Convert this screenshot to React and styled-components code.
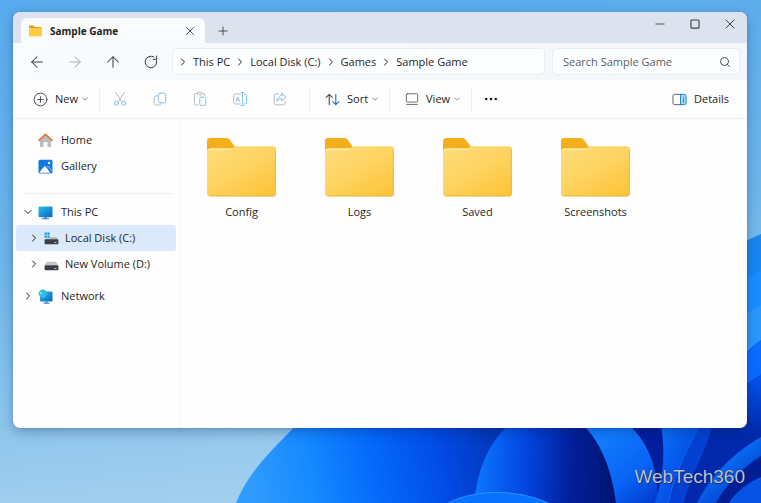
import React from "react";
import styled, { createGlobalStyle, css } from "styled-components";
import {
  ArrowLeft,
  ArrowRight,
  ArrowUp,
  ChevronDown,
  ChevronRight,
  Minus,
  Plus,
  Search,
  X,
} from "lucide-react";

const GlobalStyle = createGlobalStyle`
  * {
    box-sizing: border-box;
  }

  body {
    margin: 0;
    background: #5badee;
    color: #1f1f1f;
    font-family: "Open Sans", "Noto Sans", sans-serif;
    font-size: 11px;
    line-height: 16px;
  }

  button, input {
    font: inherit;
    color: inherit;
  }

  svg {
    display: block;
    flex: none;
  }
`;

const Desktop = styled.div`
  position: relative;
  isolation: isolate;
  min-height: 100vh;
  display: flex;
  flex-direction: column;
  padding: 12px 14px 0 13px;
`;

const WallpaperSvg = styled.svg`
  position: absolute;
  inset: 0;
  z-index: -1;
  width: 100%;
  height: 100%;
`;

const Window = styled.div`
  flex: 1;
  display: flex;
  flex-direction: column;
  overflow: hidden;
  border-radius: 7px;
  background: #fefefe;
  box-shadow: 0 0 1px rgba(0, 30, 80, 0.5), 0 4px 12px rgba(0, 30, 80, 0.3);
`;

const TitleBar = styled.header`
  display: flex;
  align-items: flex-end;
  height: 31px;
  padding-left: 8px;
  background: #dce3ee;
`;

const Tab = styled.div`
  display: flex;
  align-items: center;
  gap: 8px;
  width: 184px;
  height: 25px;
  padding: 0 5px 0 8px;
  border-radius: 6px 6px 0 0;
  background: #fafbfd;
`;

const TabTitle = styled.span`
  flex: 1;
  font-size: 10px;
  font-weight: 700;
`;

const IconButton = styled.button`
  display: flex;
  align-items: center;
  justify-content: center;
  width: ${(props) => props.$width || 24}px;
  height: 24px;
  padding: 0;
  border: 0;
  border-radius: 4px;
  background: transparent;
  color: ${(props) => (props.$muted ? "#a9adb3" : "#3a3d43")};
`;

const WindowControls = styled.div`
  display: flex;
  align-self: flex-start;
  margin-left: auto;
`;

const NavBar = styled.div`
  display: flex;
  align-items: center;
  height: 37px;
  padding: 0 7px 0 11px;
  background: linear-gradient(90deg, #fafbfd 0%, #f6f8fc 45%, #f4f6fa 100%);
`;

const NavButtons = styled.div`
  display: flex;
  gap: 12px;
  margin-right: 8px;
`;

const fieldStyle = css`
  display: flex;
  align-items: center;
  height: 27px;
  border: 1px solid #e9ecf2;
  border-radius: 5px;
  background: #fdfeff;
`;

const AddressBar = styled.nav`
  ${fieldStyle}
  flex: 1;
  gap: 4px;
  min-width: 0;
  margin-right: 7px;
  padding: 0 4px;
`;

const Crumb = styled.a`
  color: inherit;
  text-decoration: none;
  white-space: nowrap;
`;

const SearchBox = styled.label`
  ${fieldStyle}
  width: 188px;
  padding: 0 8px 0 10px;
`;

const SearchInput = styled.input`
  flex: 1;
  min-width: 0;
  padding: 0;
  border: 0;
  outline: 0;
  background: transparent;

  &::placeholder {
    color: #5b5e64;
    opacity: 1;
  }
`;

const Toolbar = styled.div`
  display: flex;
  align-items: center;
  height: 39px;
  padding: 0 9px 0 5px;
  border-bottom: 1px solid #ebedf0;
`;

const ToolButton = styled.button`
  display: flex;
  align-items: center;
  gap: 7px;
  height: 28px;
  margin-left: ${(props) => (props.$end ? "auto" : 0)};
  padding: 0 9px 0 15px;
  border: 0;
  background: transparent;
`;

const ToolLabel = styled.span`
  display: flex;
  align-items: center;
  gap: 2px;
`;

const ToolGroup = styled.div`
  display: flex;
  gap: 16px;
  padding: 0 17px 0 8px;
`;

const Divider = styled.span`
  width: 1px;
  height: 26px;
  background: #f0f1f3;
`;

const Body = styled.div`
  flex: 1;
  display: flex;
`;

const Sidebar = styled.nav`
  width: 167px;
  padding: 8px 3px;
  border-right: 1px solid #f4f5f6;
`;

const SideItem = styled.a`
  display: flex;
  align-items: center;
  height: 26px;
  padding-left: ${(props) => (props.$nested ? 12 : 6)}px;
  border-radius: 3px;
  background: ${(props) => (props.$active ? "#dbe9fa" : "transparent")};
  color: inherit;
  text-decoration: none;

  > svg {
    margin-right: ${(props) => (props.$nested ? 6 : 8)}px;
  }
`;

const ChevronSlot = styled.span`
  width: 16px;
`;

const SideRule = styled.hr`
  height: 1px;
  margin: 14px 4px 5px 7px;
  border: 0;
  background: #ecedef;
`;

const SideGap = styled.div`
  height: 6px;
`;

const Files = styled.main`
  flex: 1;
  display: flex;
  flex-wrap: wrap;
  align-content: flex-start;
  gap: 24px 49px;
  padding: 19px 27px;
`;

const FileItem = styled.a`
  display: flex;
  flex-direction: column;
  align-items: center;
  gap: 7px;
  width: 69px;
  color: inherit;
  text-decoration: none;
`;

const Watermark = styled.footer`
  height: 75px;
  padding: 36px 2px 0 0;
  color: #b9c1d8;
  font-family: "Liberation Sans", Arial, sans-serif;
  font-size: 19px;
  line-height: 26px;
  text-align: right;
  text-shadow: 0 0 1px #101c50, 1px 1px 0 rgba(20, 30, 80, 0.6);
`;

const Wallpaper = () => (
  <WallpaperSvg viewBox="0 0 761 503" preserveAspectRatio="none" aria-hidden="true">
    <defs>
      <linearGradient id="sky" x1="0.1" y1="0" x2="0.25" y2="1">
        <stop offset="0" stopColor="#58abed" />
        <stop offset="0.5" stopColor="#6db5ea" />
        <stop offset="1" stopColor="#a2cfee" />
      </linearGradient>
      <linearGradient id="p1" gradientUnits="userSpaceOnUse" x1="250" y1="480" x2="500" y2="430">
        <stop offset="0" stopColor="#2f9bfd" />
        <stop offset="0.25" stopColor="#1488ff" />
        <stop offset="0.5" stopColor="#0468fb" />
        <stop offset="0.75" stopColor="#024be6" />
        <stop offset="1" stopColor="#0233b4" />
      </linearGradient>
      <linearGradient id="p2" gradientUnits="userSpaceOnUse" x1="480" y1="455" x2="610" y2="460">
        <stop offset="0" stopColor="#0a74fc" />
        <stop offset="0.35" stopColor="#0346e2" />
        <stop offset="0.7" stopColor="#02209c" />
        <stop offset="1" stopColor="#021576" />
      </linearGradient>
      <linearGradient id="p3" gradientUnits="userSpaceOnUse" x1="600" y1="440" x2="650" y2="503">
        <stop offset="0" stopColor="#127dfe" />
        <stop offset="0.6" stopColor="#0763f5" />
        <stop offset="1" stopColor="#023dd0" />
      </linearGradient>
      <linearGradient id="p4" gradientUnits="userSpaceOnUse" x1="661" y1="440" x2="745" y2="480">
        <stop offset="0" stopColor="#0a6cf8" />
        <stop offset="0.35" stopColor="#0450e4" />
        <stop offset="1" stopColor="#011b90" />
      </linearGradient>
      <linearGradient id="p5" gradientUnits="userSpaceOnUse" x1="725" y1="455" x2="761" y2="500">
        <stop offset="0" stopColor="#0871fa" />
        <stop offset="1" stopColor="#022bb2" />
      </linearGradient>
      <linearGradient id="side" x1="0" y1="0" x2="0" y2="1">
        <stop offset="0" stopColor="#1b86ee" />
        <stop offset="0.5" stopColor="#1188fb" />
        <stop offset="1" stopColor="#0457ee" />
      </linearGradient>
      <linearGradient id="sideEnd" x1="0" y1="0" x2="0" y2="1">
        <stop offset="0" stopColor="#0456ee" />
        <stop offset="0.8" stopColor="#0229ab" />
        <stop offset="1" stopColor="#0229ab" />
      </linearGradient>
    </defs>
    <rect width="761" height="503" fill="url(#sky)" />
    <path d="M761 234C700 260 640 320 620 430h141z" fill="url(#side)" />
    <path d="M761 271C730 283 700 310 690 400h71z" fill="#1a8dff" />
    <path d="M761 305C735 318 720 335 700 430h61z" fill="#2a98fb" />
    <path d="M761 340C745 350 730 365 715 430h46z" fill="#0a6cff" />
    <path d="M310 410C284 440 250 466 236 503H761V428z" fill="url(#p1)" />
    <path d="M520 418C495 430 478 462 474 503H640V418z" fill="url(#p2)" />
    <path d="M448 503C478 488 520 490 548 503z" fill="#0872ff" />
    <path d="M448 503C478 488 520 490 548 503" fill="none" stroke="#2e93ff" />
    <path d="M615 420H740V503H657C658 465 650 440 615 420z" fill="#021e9c" />
    <path d="M578 420C601 440 612 470 616 503H658C659 470 648 437 622 420z" fill="url(#p3)" />
    <path d="M660 420C666 450 664 475 655 503H761V428L740 420z" fill="url(#p4)" />
    <path d="M704 420C688 445 676 470 668 503H697C710 475 730 455 761 437L740 420z" fill="#0341d2" />
    <path d="M704 420C688 445 676 470 668 503" fill="none" stroke="#0b66f2" />
    <path d="M712 428C704 455 688 480 684 503H697C710 475 730 455 761 437L740 420z" fill="#0229ab" />
    <path d="M761 374L740 388V449L761 437z" fill="url(#sideEnd)" />
    <path d="M761 437C730 455 710 478 697 503H761z" fill="url(#p5)" />
    <path d="M761 456C742 468 725 486 716 503H761z" fill="#011e94" />
    <path d="M761 477C745 484 734 494 729 503H761z" fill="#0653e4" />
  </WallpaperSvg>
);

/* Outline icons drawn on a 16px grid */
const Glyph = ({ size = 16, children }) => (
  <svg
    width={size}
    height={size}
    viewBox="0 0 16 16"
    fill="none"
    stroke="currentColor"
    strokeLinecap="round"
    strokeLinejoin="round"
    aria-hidden="true"
  >
    {children}
  </svg>
);

const GREY = "#b3b9c1";
const BLUE = "#8cc0ec";

const ReloadIcon = () => (
  <Glyph>
    <path d="M13.6 6.6A5.8 5.8 0 1 1 11 3" />
    <path d="M13.6 2v3.4h-3.4" />
  </Glyph>
);

const NewIcon = () => (
  <Glyph size={15}>
    <circle cx="8" cy="8" r="6.8" stroke="#4a4d53" />
    <path d="M8 5v6M5 8h6" stroke="#4a4d53" />
  </Glyph>
);

const CutIcon = () => (
  <Glyph>
    <path d="M4 1.8 10 11M12 1.8 6 11" stroke={GREY} />
    <circle cx="4.4" cy="12.2" r="2.1" stroke={BLUE} />
    <circle cx="11.6" cy="12.2" r="2.1" stroke={BLUE} />
  </Glyph>
);

const CopyIcon = () => (
  <Glyph>
    <path d="M5.5 5H3.7a1.4 1.4 0 0 0-1.4 1.4v6.2A1.4 1.4 0 0 0 3.7 14h3.6a1.4 1.4 0 0 0 1.4-1.4V12" stroke={GREY} />
    <rect x="6.6" y="2.2" width="7" height="9.6" rx="1.4" stroke={BLUE} />
  </Glyph>
);

const PasteIcon = () => (
  <Glyph>
    <path d="M5 2.6H3.6a1.2 1.2 0 0 0-1.2 1.2v9A1.2 1.2 0 0 0 3.6 14H6M10.6 2.6h.8a1.2 1.2 0 0 1 1.2 1.2v1" stroke={GREY} />
    <rect x="5.2" y="1.4" width="5" height="2.4" rx="1" stroke={GREY} />
    <rect x="7.8" y="6.2" width="6" height="8.2" rx="1.2" stroke={BLUE} />
  </Glyph>
);

const RenameIcon = () => (
  <Glyph>
    <path d="M8.6 3H3.4a1.7 1.7 0 0 0-1.7 1.7v6.6A1.7 1.7 0 0 0 3.4 13h5.2" stroke={GREY} />
    <path d="M12.4 3h.4a1.7 1.7 0 0 1 1.7 1.7v6.6a1.7 1.7 0 0 1-1.7 1.7h-.4M10.5 1.6v12.8M9.2 1.5h2.6M9.2 14.5h2.6" stroke={BLUE} />
    <path d="M4 10.2 5.8 5.8l1.8 4.4M4.600 8.900H7" stroke={BLUE} />
  </Glyph>
);

const ShareIcon = () => (
  <Glyph>
    <path d="M6.5 3H3.8a1.6 1.6 0 0 0-1.6 1.6v7.6a1.6 1.6 0 0 0 1.6 1.6h7.6a1.6 1.6 0 0 0 1.6-1.6V11" stroke={GREY} />
    <path d="M9.8 2.2 14 6 9.8 9.8V7.6C7.6 7.5 6 8.4 4.9 10.4 5.1 7 7 4.7 9.8 4.4z" stroke={BLUE} />
  </Glyph>
);

const SortIcon = () => (
  <Glyph size={15}>
    <path d="M4.500 13.500V2.500M1.200 5.800l3.300-3.300 3.300 3.300" stroke="#4b5058" strokeWidth="1.200" />
    <path d="M11.500 2.500v11M8.200 10.200l3.300 3.300 3.300-3.300" stroke="#1374d4" strokeWidth="1.200" />
  </Glyph>
);

const ViewIcon = () => (
  <Glyph size={14}>
    <rect x="1.5" y="2" width="13" height="9.500" rx="1.200" stroke="#555a61" />
    <path d="M2 14.200h12" stroke="#555a61" />
  </Glyph>
);

const DetailsIcon = () => (
  <Glyph size={15}>
    <path d="M9.5 2.5H3a2 2 0 0 0-2 2v7a2 2 0 0 0 2 2h6.5" stroke="#555a61" />
    <path d="M9.5 2.5H13a2 2 0 0 1 2 2v7a2 2 0 0 1-2 2H9.5z" fill="#a9dbfb" stroke="#1479d6" />
    <path d="M12.2 5.5v1M12.2 8v3" stroke="#1479d6" />
  </Glyph>
);

const MoreIcon = () => (
  <Glyph>
    <g fill="#1f1f1f" stroke="none">
      <circle cx="3.2" cy="8" r="1.3" />
      <circle cx="8" cy="8" r="1.3" />
      <circle cx="12.8" cy="8" r="1.3" />
    </g>
  </Glyph>
);

const MaximizeIcon = () => (
  <Glyph size={10}>
    <rect x="1.5" y="1.5" width="13" height="13" rx="1.5" strokeWidth="1.8" />
  </Glyph>
);

const Folder = ({ id }) => (
  <svg width="69" height="59" viewBox="0 0 69 59" aria-hidden="true">
    <defs>
      <linearGradient id={id} x1="0" y1="0" x2="0.8" y2="1">
        <stop offset="0" stopColor="#fedd7c" />
        <stop offset="0.5" stopColor="#fed463" />
        <stop offset="1" stopColor="#fdc53b" />
      </linearGradient>
    </defs>
    <path d="M0 3Q0 0 3 0H19.5Q21.5 0 22.8 1.8L28 9V20H0z" fill="#f3b01b" />
    <path d="M0 13.5Q0 10.5 3 10.5H23.5Q25.5 10.5 27 9.3 28.500 8.200 30 8.200H66Q69 8.200 69 11.200V55.500Q69 58.500 66 58.500H3Q0 58.500 0 55.500z" fill={`url(#${id})`} />
    <path d="M2.5 57.8H66.5Q68.3 57.4 68.3 55.5V12" fill="none" stroke="#efb846" />
    <path d="M1.5 12.5Q2 11.2 4 11.2H25" fill="none" stroke="#fff0b8" strokeWidth="1.2" />
  </svg>
);

const SmallFolder = () => (
  <svg width="13" height="12" viewBox="0 0 13 12" aria-hidden="true">
    <path d="M0 1.5Q0 .5 1 .5H4.5L6 2H11.5Q12.500 2 12.500 3V6H0z" fill="#e59b1c" />
    <path d="M0 3H11.800Q13 3 13 4V10.500Q13 11.500 12 11.500H1Q0 11.500 0 10.500z" fill="#fecb45" />
  </svg>
);

const HomeIcon = () => (
  <svg width="15" height="15" viewBox="0 0 15 15" aria-hidden="true">
    <path d="M2 6.5 7.5 1.8 13 6.5V13.3Q13 14 12.3 14H9.5V9.8Q9.5 9 8.7 9H6.3Q5.5 9 5.5 9.8V14H2.7Q2 14 2 13.3z" fill="#b9bcc1" />
    <path d="M1 7.3 7.5 1.4 14 7.3" fill="none" stroke="#e27a36" strokeWidth="1.8" strokeLinecap="round" strokeLinejoin="round" />
  </svg>
);

const GalleryIcon = () => (
  <svg width="15" height="15" viewBox="0 0 15 15" aria-hidden="true">
    <rect x=".5" y=".8" width="14" height="13.8" rx="1.5" fill="#1279de" />
    <path d="M1.2 13.8 6 7.600Q6.800 6.700 7.600 7.600L12.400 13.800z" fill="#fff" />
    <path d="M9 8 10 7 13.800 11.500" fill="none" stroke="#8fc6f7" />
    <circle cx="11" cy="4" r="1.2" fill="#fff" />
  </svg>
);

const MonitorIcon = () => (
  <svg width="15" height="15" viewBox="0 0 15 15" aria-hidden="true">
    <defs>
      <linearGradient id="screen" x1="0" y1="0" x2="1" y2="1">
        <stop offset="0" stopColor="#2cc3e6" />
        <stop offset="1" stopColor="#0c5fc4" />
      </linearGradient>
    </defs>
    <rect x=".5" y="1.5" width="14" height="10.8" rx="1" fill="url(#screen)" />
    <path d="M6.5 12h2v1.300h2.500v1H4v-1h2.500z" fill="#2a7fc9" />
  </svg>
);

const DriveIcon = ({ system }) => (
  <svg width="15" height="15" viewBox="0 0 15 15" aria-hidden="true">
    {system ? (
      <>
        <path d="M.5 1.5h2.300v2.300H.5zM3.400 1.500h2.300v2.300H3.400zM.5 4.400h2.300v2.300H.5zM3.400 4.400h2.300v2.300H3.400z" fill="#1b9be4" />
        <path d="M6.5 6H12.5L14 8.800H1.500L2.500 7.500H6z" fill="#b4b7bb" />
      </>
    ) : (
      <path d="M3 4.8H12L14.2 8.300H.8z" fill="#c3c5c8" />
    )}
    <rect x=".6" y="8.2" width="13.8" height="5" rx=".8" fill="#3b3f45" />
    <path d="M10 11.5h2.5" stroke="#9fe3f5" strokeWidth=".8" />
  </svg>
);

const NetworkIcon = () => (
  <svg width="15" height="15" viewBox="0 0 15 15" aria-hidden="true">
    <rect x="2" y="2.5" width="12.5" height="10" rx="1" fill="url(#screen)" />
    <path d="M7.5 12.5h2v1.200h2v1H5.500v-1h2z" fill="#2a7fc9" />
    <circle cx="4.8" cy="4.6" r="4.2" fill="#35b9e6" />
    <path d="M1.8 3.2Q3.500 3.500 3.300 5.300" fill="none" stroke="#a7ebf7" strokeWidth="1.200" />
  </svg>
);

const crumbs = ["This PC", "Local Disk (C:)", "Games", "Sample Game"];

const folders = ["Config", "Logs", "Saved", "Screenshots"];

const fileActions = [
  { label: "Cut", icon: CutIcon },
  { label: "Copy", icon: CopyIcon },
  { label: "Paste", icon: PasteIcon },
  { label: "Rename", icon: RenameIcon },
  { label: "Share", icon: ShareIcon },
];

const SideLink = ({ icon, label, nested, active, chevron: Chevron }) => (
  <SideItem href="#" $nested={nested} $active={active}>
    <ChevronSlot>{Chevron && <Chevron size={12} strokeWidth={2} />}</ChevronSlot>
    {icon}
    {label}
  </SideItem>
);

const MenuButton = ({ icon, label }) => (
  <ToolButton type="button">
    {icon}
    <ToolLabel>
      {label}
      <ChevronDown size={10} strokeWidth={2} color="#777b82" />
    </ToolLabel>
  </ToolButton>
);

const App = () => {
  return (
    <Desktop>
      <GlobalStyle />
      <Wallpaper />
      <Window>
        <TitleBar>
          <Tab>
            <SmallFolder />
            <TabTitle>Sample Game</TabTitle>
            <IconButton type="button" $width={20} aria-label="Close tab">
              <X size={14} strokeWidth={1.5} />
            </IconButton>
          </Tab>
          <IconButton type="button" $width={35} aria-label="New tab">
            <Plus size={14} strokeWidth={1.5} />
          </IconButton>
          <WindowControls>
            <IconButton type="button" $width={35} aria-label="Minimize">
              <Minus size={14} strokeWidth={1.5} />
            </IconButton>
            <IconButton type="button" $width={35} aria-label="Maximize">
              <MaximizeIcon />
            </IconButton>
            <IconButton type="button" $width={35} aria-label="Close">
              <X size={16} strokeWidth={1.5} />
            </IconButton>
          </WindowControls>
        </TitleBar>

        <NavBar>
          <NavButtons>
            <IconButton type="button" $width={26} aria-label="Back">
              <ArrowLeft size={18} strokeWidth={1.4} />
            </IconButton>
            <IconButton type="button" $width={26} $muted aria-label="Forward">
              <ArrowRight size={18} strokeWidth={1.4} />
            </IconButton>
            <IconButton type="button" $width={26} aria-label="Up">
              <ArrowUp size={18} strokeWidth={1.4} />
            </IconButton>
            <IconButton type="button" $width={26} aria-label="Refresh">
              <ReloadIcon />
            </IconButton>
          </NavButtons>
          <AddressBar aria-label="Address">
            {crumbs.map((crumb) => (
              <React.Fragment key={crumb}>
                <ChevronRight size={12} strokeWidth={2} />
                <Crumb href="#">{crumb}</Crumb>
              </React.Fragment>
            ))}
          </AddressBar>
          <SearchBox>
            <SearchInput type="text" placeholder="Search Sample Game" aria-label="Search Sample Game" />
            <Search size={12} strokeWidth={2} color="#4a4d53" />
          </SearchBox>
        </NavBar>

        <Toolbar>
          <MenuButton icon={<NewIcon />} label="New" />
          <Divider />
          <ToolGroup>
            {fileActions.map(({ label, icon: Icon }) => (
              <IconButton type="button" key={label} aria-label={label}>
                <Icon />
              </IconButton>
            ))}
          </ToolGroup>
          <Divider />
          <MenuButton icon={<SortIcon />} label="Sort" />
          <Divider />
          <MenuButton icon={<ViewIcon />} label="View" />
          <Divider />
          <IconButton type="button" $width={38} aria-label="More">
            <MoreIcon />
          </IconButton>
          <ToolButton type="button" $end>
            <DetailsIcon />
            Details
          </ToolButton>
        </Toolbar>

        <Body>
          <Sidebar aria-label="Places">
            <SideLink icon={<HomeIcon />} label="Home" />
            <SideLink icon={<GalleryIcon />} label="Gallery" />
            <SideRule />
            <SideLink icon={<MonitorIcon />} label="This PC" chevron={ChevronDown} />
            <SideLink icon={<DriveIcon system />} label="Local Disk (C:)" chevron={ChevronRight} nested active />
            <SideLink icon={<DriveIcon />} label="New Volume (D:)" chevron={ChevronRight} nested />
            <SideGap />
            <SideLink icon={<NetworkIcon />} label="Network" chevron={ChevronRight} />
          </Sidebar>
          <Files>
            {folders.map((name) => (
              <FileItem href="#" key={name}>
                <Folder id={`folder-${name}`} />
                {name}
              </FileItem>
            ))}
          </Files>
        </Body>
      </Window>
      <Watermark>WebTech360</Watermark>
    </Desktop>
  );
};

export default App;
